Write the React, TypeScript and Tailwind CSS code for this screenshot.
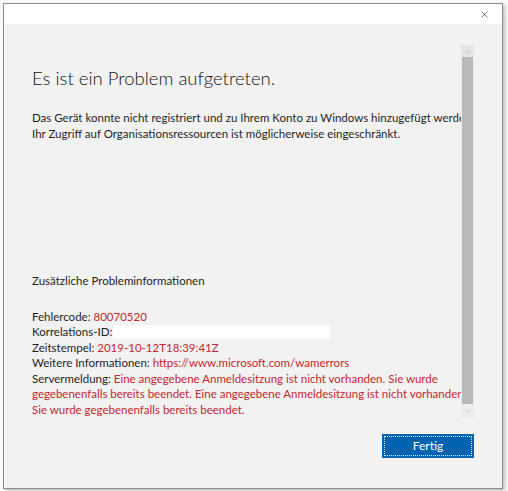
import { X, ChevronUp, ChevronDown } from "lucide-react";

const red = "text-[#c4262e]";

export default function App() {
  return (
    <div className="w-[508px] h-[491px] bg-[#fbfbfb] relative overflow-hidden" style={{ fontFamily: 'Lato, "Noto Sans", sans-serif' }}>
      <div className="ml-[3px] mt-[3px] w-[500px] h-[486px] border border-[#8c8c8c] bg-[#f2f2f2] flex flex-col shadow-[2px_2px_4px_rgba(0,0,0,0.25)]">
        <div className="h-[20px] bg-white flex justify-end items-center pr-[12px]">
          <X size={11} strokeWidth={1.3} className="text-[#222]" />
        </div>

        <div className="flex flex-1 min-h-0">
          <div className="flex-1 min-w-0 overflow-hidden pl-[28px] pt-[41px] text-[11.5px] leading-[15.5px] text-[#1f1f1f] whitespace-nowrap">
            <h1 className="text-[18.5px] leading-[26px] font-light text-[#111]">Es ist ein Problem aufgetreten.</h1>
            <p className="mt-[19px]">
              Das Gerät konnte nicht registriert und zu Ihrem Konto zu Windows hinzugefügt werden.
              <br />
              Ihr Zugriff auf Organisationsressourcen ist möglicherweise eingeschränkt.
            </p>
            <p className="mt-[132px]">Zusätzliche Probleminformationen</p>
            <div className="mt-[20px]">
              <div>
                Fehlercode: <span className={red}>80070520</span>
              </div>
              <div className="flex items-center">
                Korrelations-ID:
                <span className="ml-[1px] inline-block w-[217px] h-[14px] bg-white" />
              </div>
              <div>
                Zeitstempel: <span className={red}>2019-10-12T18:39:41Z</span>
              </div>
              <div>
                Weitere Informationen: <span className={red}>https://www.microsoft.com/wamerrors</span>
              </div>
              <div>
                Servermeldung: <span className={red}>Eine angegebene Anmeldesitzung ist nicht vorhanden. Sie wurde</span>
              </div>
              <div className={red}>gegebenenfalls bereits beendet. Eine angegebene Anmeldesitzung ist nicht vorhanden.</div>
              <div className={red}>Sie wurde gegebenenfalls bereits beendet.</div>
            </div>
          </div>

          <div className="w-[41px] shrink-0 pt-[21px] flex flex-col">
            <div className="w-[13px] h-[373px] bg-[#ececec] flex flex-col">
              <div className="h-[12px] flex items-center justify-center bg-[#e6e6e6]">
                <ChevronUp size={9} strokeWidth={1.2} className="text-[#999]" />
              </div>
              <div className="h-[347px] bg-[#b9b9b9] mx-[1px]" />
              <div className="flex-1 flex items-center justify-center">
                <ChevronDown size={9} strokeWidth={1.2} className="text-[#aaa]" />
              </div>
            </div>
            <div className="mt-[16px] -ml-[79px] w-[92px] h-[24px] bg-[#0063b1] p-[2px]">
              <div className="w-full h-full border border-dotted border-[#d8e6f5] flex items-center justify-center text-white text-[12px]">
                Fertig
              </div>
            </div>
          </div>
        </div>
      </div>
    </div>
  );
}
